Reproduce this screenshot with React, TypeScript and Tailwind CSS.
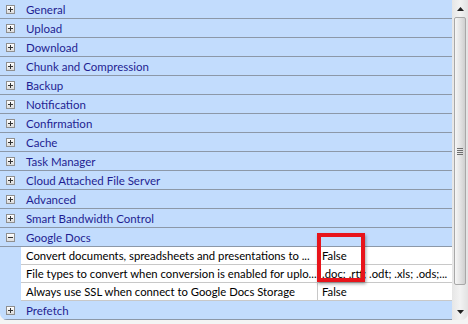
const groups = [
  'General',
  'Upload',
  'Download',
  'Chunk and Compression',
  'Backup',
  'Notification',
  'Confirmation',
  'Cache',
  'Task Manager',
  'Cloud Attached File Server',
  'Advanced',
  'Smart Bandwidth Control',
];

const googleDocsItems = [
  { name: 'Convert documents, spreadsheets and presentations to ...', value: 'False' },
  { name: 'File types to convert when conversion is enabled for uplo...', value: '.doc; .rtf; .odt; .xls; .ods;...' },
  { name: 'Always use SSL when connect to Google Docs Storage', value: 'False' },
];

const ToggleBox = ({ open }: { open?: boolean }) => (
  <span className="relative flex h-[9px] w-[9px] items-center justify-center border border-[#8f8f8f] bg-gradient-to-b from-white to-[#dcdcdc]">
    <span className="absolute h-[1px] w-[5px] bg-[#333]" />
    {open ? null : <span className="absolute h-[5px] w-[1px] bg-[#333]" />}
  </span>
);

const GroupRow = ({ label, open }: { label: string; open?: boolean }) => (
  <div className="flex h-[19px] shrink-0 items-center border-b border-[#8c98a8] pl-[6px]">
    <ToggleBox open={open} />
    <span className="ml-[11px] pt-[2px] text-[11.5px] leading-none text-[#1f1e92]">{label}</span>
  </div>
);

const ItemRow = ({ name, value }: { name: string; value: string }) => (
  <div className="flex h-[18px] shrink-0">
    <div className="w-[21px] shrink-0" />
    <div className="flex flex-1 border-b border-[#c8c8c8] bg-white text-[11.3px] leading-none text-black">
      <div className="flex w-[297px] shrink-0 items-center overflow-hidden whitespace-nowrap border-r border-[#c8c8c8] pl-[5px] pt-[1px]">{name}</div>
      <div className="flex min-w-0 flex-1 items-center overflow-hidden whitespace-nowrap pl-[4px] pt-[1px]">{value}</div>
    </div>
  </div>
);

const Arrow = ({ down }: { down?: boolean }) => (
  <div className="flex h-[17px] items-center justify-center">
    <svg width="7" height="4" viewBox="0 0 7 4">
      {down ? <path d="M0 0h7L3.5 4z" fill="#222" /> : <path d="M0 4h7L3.5 0z" fill="#222" />}
    </svg>
  </div>
);

export default function App() {
  return (
    <div className="relative h-[324px] w-[468px] overflow-hidden bg-[#f4f4f4]" style={{ fontFamily: '"Segoe UI", Lato, "Noto Sans", sans-serif' }}>
      <div className="flex h-[320px] overflow-hidden rounded-b-[7px]">
        <div className="flex min-w-0 flex-1 flex-col bg-[#c2dcfd]">
          {groups.map((g) => (
            <GroupRow key={g} label={g} />
          ))}
          <GroupRow label="Google Docs" open />
          {googleDocsItems.map((item) => (
            <ItemRow key={item.name} name={item.name} value={item.value} />
          ))}
          <GroupRow label="Prefetch" />
        </div>
        <div className="flex w-[16px] shrink-0 flex-col bg-gradient-to-r from-[#e6e6e6] via-[#f2f2f2] to-[#e2e2e2]">
          <Arrow />
          <div className="flex-1 px-[2px]">
            <div className="flex h-[268px] items-center justify-center rounded-[2px] border border-[#a8a8a8] bg-gradient-to-r from-[#f6f6f6] via-[#e4e4e4] to-[#cfcfcf]">
              <div className="flex flex-col gap-[1px]">
                <span className="h-[1px] w-[6px] bg-[#6e6e6e]" />
                <span className="h-[1px] w-[6px] bg-[#6e6e6e]" />
                <span className="h-[1px] w-[6px] bg-[#6e6e6e]" />
                <span className="h-[1px] w-[6px] bg-[#6e6e6e]" />
              </div>
            </div>
          </div>
          <Arrow down />
        </div>
      </div>
      <div className="absolute left-[317px] top-[233px] h-[49px] w-[48px] border-[4px] border-[#e8141b] shadow-[1px_2px_3px_rgba(0,0,0,0.35)]" />
    </div>
  );
}
